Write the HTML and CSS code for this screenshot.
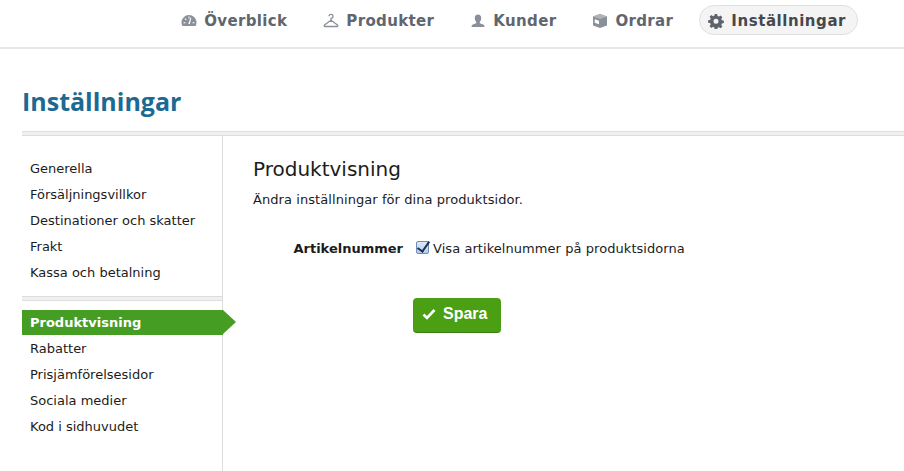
FILE: index.html
```html
<!DOCTYPE html>
<html lang="sv">
<head>
<meta charset="utf-8">
<title>Inställningar</title>
<link rel="stylesheet" href="styles.css">
</head>
<body>
<header class="topbar">
  <nav class="topnav">
    <a class="navitem">
      <svg class="navicon" viewBox="0 0 16 16"><path fill="#8a9099" fill-rule="evenodd" d="M8 2a7.500 7.500 0 0 0-7.500 7.500c0 1.400.4 2.600 1 3.500h13c.6-.9 1-2.100 1-3.500A7.500 7.500 0 0 0 8 2zM7.300 11 9.500 4.500l.8.3L8.800 11.200zM2.500 9.200h2v1h-2zM11.500 9.200h2v1h-2zM4.200 5.200l1.400 1.400-.7.7-1.400-1.400zM7.500 3.500h1v2h-1z"/></svg>
      Överblick</a>
    <a class="navitem">
      <svg class="navicon" viewBox="0 0 16 16"><path fill="none" stroke="#8a9099" stroke-width="1.300" d="M6 3.300A2 2 0 1 1 8 5.300V7.200L14.500 12c.6.500.3 1.500-.5 1.500H2c-.8 0-1.100-1-.5-1.500L8 7.200"/></svg>
      Produkter</a>
    <a class="navitem">
      <svg class="navicon" viewBox="0 0 16 16"><path fill="#8a9099" d="M8 1.500c2 0 3.200 1.500 3.200 3.500S10.300 8.500 9.700 9.200c0 1 .6 1.300 2.300 1.800 1.500.5 2.500 1 2.500 3H1.500c0-2 1-2.500 2.500-3 1.700-.5 2.300-.8 2.300-1.800C5.700 8.500 4.800 7 4.800 5s1.200-3.500 3.200-3.500z"/></svg>
      Kunder</a>
    <a class="navitem">
      <svg class="navicon" viewBox="0 0 16 16"><path fill="#8a9099" d="M1 3.500 8 1l7 2.500v9L8 15l-7-2.500z"/><path fill="#fff" d="M2.700 6.300 7 7.800v3.400L2.700 9.700z"/><path fill="#aeb3b9" d="M8 1l7 2.500L8 6 1 3.500z"/></svg>
      Ordrar</a>
    <a class="navitem navitem-active">
      <svg class="navicon" viewBox="0 0 16 16"><path fill="#5f646b" fill-rule="evenodd" d="M6.800 1h2.400l.4 2 1.400.6 1.700-1.100 1.700 1.700-1.100 1.700.6 1.400 2 .4v2.400l-2 .4-.6 1.400 1.100 1.700-1.700 1.700-1.700-1.100-1.400.6-.4 2H6.800l-.4-2L5 13.800l-1.700 1.100-1.700-1.700 1.100-1.700-.6-1.400-2-.4V7.300l2-.4.6-1.400-1.100-1.700 1.700-1.700L5 3.200l1.400-.6zM8 5.800a2.500 2.500 0 1 0 0 5 2.500 2.500 0 0 0 0-5z"/></svg>
      Inställningar</a>
  </nav>
</header>
<main class="page">
  <h1 class="pagetitle">Inställningar</h1>
  <div class="rule"></div>
  <div class="columns">
    <aside class="sidebar">
      <ul class="menu">
        <li class="menuitem">Generella</li>
        <li class="menuitem">Försäljningsvillkor</li>
        <li class="menuitem">Destinationer och skatter</li>
        <li class="menuitem">Frakt</li>
        <li class="menuitem">Kassa och betalning</li>
      </ul>
      <div class="rule menusep"></div>
      <ul class="menu">
        <li class="menuitem menuitem-active">Produktvisning</li>
        <li class="menuitem">Rabatter</li>
        <li class="menuitem">Prisjämförelsesidor</li>
        <li class="menuitem">Sociala medier</li>
        <li class="menuitem">Kod i sidhuvudet</li>
      </ul>
    </aside>
    <section class="content">
      <h2 class="sectiontitle">Produktvisning</h2>
      <p class="lead">Ändra inställningar för dina produktsidor.</p>
      <div class="formrow">
        <span class="formlabel">Artikelnummer</span>
        <label class="check"><input class="checkbox" type="checkbox" checked>Visa artikelnummer på produktsidorna</label>
      </div>
      <div class="actions">
        <button class="savebtn" type="button">
          <svg class="saveicon" viewBox="0 0 14 14"><path fill="none" stroke="#fff" stroke-width="2.600" d="M1.500 7.500 5 11l7.500-8"/></svg>
          Spara</button>
      </div>
    </section>
  </div>
</main>
</body>
</html>
```
FILE: styles.css
```css
* { box-sizing: border-box; }
html, body { margin: 0; padding: 0; height: 471px; overflow: hidden; background: #fff; }
body { font-family: "DejaVu Sans", sans-serif; font-size: 13px; color: #1c1c1c; }

.topbar {
  height: 49px;
  border-bottom: 2px solid #e6e6e6;
  display: flex;
  justify-content: flex-end;
  padding: 5px 46px 0 0;
}
.topnav { display: flex; align-items: flex-start; }
.navitem {
  display: flex;
  align-items: center;
  height: 30px;
  padding: 1px 11px 0 12px;
  margin-left: 13px;
  gap: 7px;
  font-size: 15px;
  font-weight: 700;
  letter-spacing: 0.35px;
  color: #5f666f;
}
.navicon { width: 16px; height: 16px; flex: none; }
.navitem-active {
  background: #f4f4f4;
  border: 1px solid #e0e0e0;
  border-radius: 15px;
  color: #45484d;
  padding: 1px 11px 0 8px;
  margin-left: 15px;
  letter-spacing: 0.55px;
}

.page { padding-left: 22px; }
.pagetitle {
  margin: 0;
  padding-top: 35px;
  height: 82px;
  font-family: "Open Sans", sans-serif;
  font-size: 25px;
  line-height: 34px;
  font-weight: 700;
  color: #1c6a94;
}
.rule {
  height: 5px;
  background: #f0f0f0;
  border-top: 1px solid #dedede;
  border-bottom: 1px solid #dedede;
}
.columns { display: flex; height: 335px; }
.sidebar {
  width: 201px;
  flex: none;
  border-right: 1px solid #dcdcdc;
  padding-top: 20px;
}
.menu { list-style: none; margin: 0; padding: 0; }
.menuitem {
  height: 26px;
  line-height: 26px;
  padding-left: 8px;
}
.menusep { margin: 10px 0 9px; }
.menuitem-active {
  position: relative;
  width: 201px;
  height: 25px;
  line-height: 25px;
  margin-bottom: 1px;
  background: #469d24;
  color: #fff;
  font-weight: 700;
}
.menuitem-active::after {
  content: "";
  position: absolute;
  left: 201px;
  top: 0;
  border-style: solid;
  border-width: 12.500px 0 12.500px 13px;
  border-color: transparent transparent transparent #469d24;
}

.content { flex: 1; padding: 21px 0 0 30px; }
.sectiontitle {
  margin: 0;
  font-size: 20px;
  line-height: 24px;
  font-weight: 400;
  color: #1c1c1c;
}
.lead { margin: 10px 0 0; line-height: 18px; letter-spacing: 0.07px; }
.formrow { display: flex; align-items: center; margin-top: 28px; height: 22px; }
.formlabel { width: 150px; text-align: right; font-weight: 700; }
.check { display: flex; align-items: center; margin-left: 13px; letter-spacing: 0.06px; }
.checkbox {
  appearance: none;
  position: relative;
  width: 13px;
  height: 13px;
  margin: -1px 4px 0 0;
  border: 1px solid #6f8cb8;
  border-radius: 2px;
  background: linear-gradient(#dfe9f7, #b5cdec);
}
.checkbox::after {
  content: "";
  position: absolute;
  left: 3px;
  top: -3px;
  width: 5px;
  height: 11px;
  border: solid #17305c;
  border-width: 0 2px 2px 0;
  transform: rotate(35deg);
}
.actions { margin: 39px 0 0 160px; }
.savebtn {
  display: flex;
  align-items: center;
  gap: 7px;
  width: 88px;
  height: 35px;
  padding: 0 0 2px 9px;
  border: 0;
  border-bottom: 1px solid #3b7c12;
  border-radius: 4px;
  background: #4b9f13;
  color: #fff;
  font-family: "Liberation Sans", sans-serif;
  font-size: 16px;
  font-weight: 700;
}
.saveicon { width: 14px; height: 14px; flex: none; }
```
